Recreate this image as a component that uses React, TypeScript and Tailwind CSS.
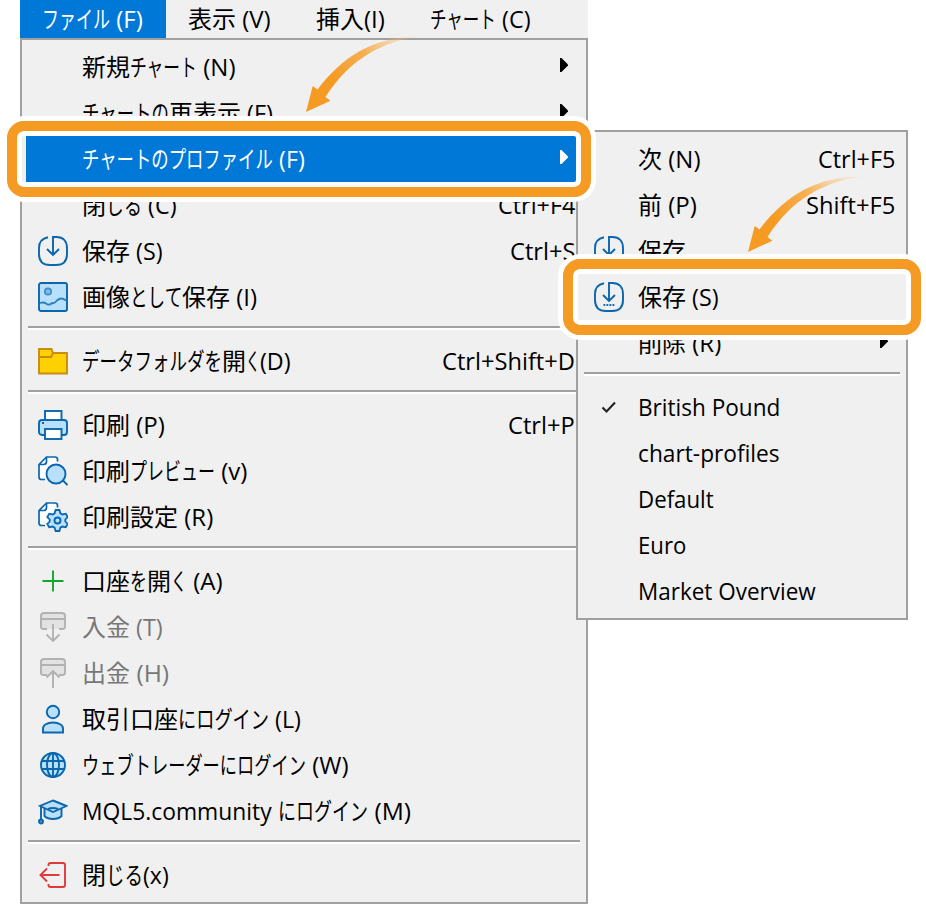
import { useLayoutEffect, useRef, useState } from 'react'
import type { ReactNode } from 'react'

// A run of text and the width it takes up in the menu font
type Run = [text: string, width: number]

interface MenuEntry {
  label: Run[]
  icon?: ReactNode
  shortcut?: Run
  submenu?: boolean
  active?: boolean
  disabled?: boolean
}

const BLUE = '#0a66ad'
const SKY = '#b9e0fb'

function FittedRun({ text, width }: { text: string; width: number }) {
  const ref = useRef<HTMLSpanElement>(null)
  const [scale, setScale] = useState(1)

  useLayoutEffect(() => {
    if (ref.current) setScale(width / ref.current.offsetWidth)
  }, [text, width])

  return (
    <span className="inline-block" style={{ width }}>
      <span ref={ref} className="inline-block origin-left whitespace-pre" style={{ transform: `scaleX(${scale})` }}>
        {text}
      </span>
    </span>
  )
}

function Label({ runs }: { runs: Run[] }) {
  return (
    <span className="flex whitespace-pre">
      {runs.map(([text, width]) => (
        <FittedRun key={text} text={text} width={width} />
      ))}
    </span>
  )
}

function Icon({ children, color = BLUE }: { children: ReactNode; color?: string }) {
  return (
    <svg width="30" height="30" viewBox="0 0 30 30" fill="none" stroke={color} strokeWidth="1.9">
      {children}
    </svg>
  )
}

function SaveIcon({ dots = false }: { dots?: boolean }) {
  return (
    <Icon>
      <path d="M10 1.300C4 2.500 1 6 1 12v6c0 7 4 11 11 11h6c7 0 11-4 11-11v-6c0-7-4-11-10.500-11H15v18" />
      <path d="M9 13l6 6 6-6" />
      {dots && <path d="M9.500 23h11" strokeDasharray="1.800 1.200" />}
    </Icon>
  )
}

function ImageIcon() {
  return (
    <Icon>
      <rect x="1" y="1" width="28" height="28" rx="2" fill={SKY} />
      <circle cx="10" cy="9.500" r="3.200" fill="#82bde8" stroke="#3f8fc8" strokeWidth="1.700" />
      <path d="M2 21c3-1 4-1 6 .5s4 1.500 6-.5c2 1 3 0 5-2.500 3-3 6-2.500 9 0" stroke="#2a7fbd" strokeWidth="1.800" />
    </Icon>
  )
}

function FolderIcon() {
  return (
    <Icon color="#c98b12">
      <path d="M1 3h12.500L15 7h14v20.500H1z" fill="#fdd000" />
      <path d="M1 11h12l2-4" />
    </Icon>
  )
}

function PrinterIcon() {
  return (
    <Icon>
      <rect x="1" y="10" width="28" height="15" rx="3" fill={SKY} />
      <rect x="7" y="1" width="16.500" height="9" fill="#fff" />
      <rect x="7" y="19" width="16.500" height="10" fill="#fff" />
      <path d="M4 13h2" />
    </Icon>
  )
}

function PagePath() {
  return (
    <>
      <path d="M8 1h9.500l2 2v5L8 23.500H2L1 8z" fill="#fff" stroke="none" />
      <path d="M19.500 5.500V3.500Q19.500 1 17 1H8.500L1 8.500V21q0 2.500 2.500 2.500H7M1 8.500h4.500q3 0 3-3V1" strokeWidth="1.700" />
    </>
  )
}

function PreviewIcon() {
  return (
    <Icon>
      <PagePath />
      <circle cx="18" cy="18" r="9.500" fill={SKY} />
      <path d="M25 24.500l4.500 4.500" />
    </Icon>
  )
}

function SettingsIcon() {
  return (
    <Icon>
      <PagePath />
      <path
        d="M17.600 8h3.800l1 3.300 2 1.200 3.400-.8 1.900 3.300-2.400 2.500v2l2.400 2.500-1.900 3.300-3.400-.8-2 1.200-1 3.300h-3.800l-1-3.300-2-1.200-3.400.8L9.300 22l2.400-2.500v-2L9.300 15l1.900-3.300 3.400.8 2-1.200z"
        fill={SKY}
        strokeWidth="1.800"
      />
      <circle cx="19.500" cy="18.500" r="3" />
    </Icon>
  )
}

function CardIcon({ up = false }: { up?: boolean }) {
  return (
    <Icon color="#b2b2b2">
      <path d="M2.500 1h25v16h-25z" fill="#e2e2e2" stroke="none" />
      <path d="M9 17H5.500Q3 17 3 14.500V4q0-3 3-3h18q3 0 3 3v10.500q0 2.500-2.500 2.500H21M3 7h24" />
      {up ? <path d="M15 30V13.500M8.500 19.500l6.500-6.500 6.500 6.500" /> : <path d="M15 12v16.500M8.500 22.500l6.500 6.500 6.500-6.500" />}
    </Icon>
  )
}

function UserIcon() {
  return (
    <Icon>
      <circle cx="15" cy="8" r="6.200" fill={SKY} />
      <path d="M5 28.500v-4c0-3.500 4-6 10-6s10 2.500 10 6v4z" fill={SKY} />
    </Icon>
  )
}

function GlobeIcon() {
  return (
    <Icon>
      <circle cx="15" cy="15" r="12" fill={SKY} />
      <ellipse cx="15" cy="15" rx="6" ry="12" />
      <path d="M15 3v24M4 11h22M4 19h22" />
    </Icon>
  )
}

function CapIcon() {
  return (
    <Icon>
      <path d="M6.500 12v8c4 4 13 4 17 0v-8" fill={SKY} />
      <path d="M15 4.500L28.500 10 15 16 2 10z" fill={SKY} />
      <path d="M10 13q5-2 10 0M3 10.500v13" />
      <circle cx="3" cy="25.500" r="2" fill="#4f9ad0" />
    </Icon>
  )
}

function PlusIcon() {
  return (
    <Icon color="#12a52e">
      <path d="M15 4.500v21M4.500 15h21" />
    </Icon>
  )
}

function ExitIcon() {
  return (
    <Icon color="#de3b39">
      <path d="M10.500 6V5q0-2 2-2H25q2 0 2 2v20q0 2-2 2H12.500q-2 0-2-2v-1M21.500 15H3M9 8.500L2.500 15 9 21.500" />
    </Icon>
  )
}

function CheckIcon() {
  return (
    <Icon color="#222">
      <path d="M8.500 15.500l4 4L21 10.500" strokeWidth="2.100" />
    </Icon>
  )
}

const menuBar: { label: Run[]; className: string }[] = [
  { label: [['ファイル', 68], [' (F)', 33]], className: 'w-[146px] bg-[#0078d7] pl-[22px] text-white' },
  { label: [['表示', 48], [' (V)', 35]], className: 'w-[128px] pl-[22px]' },
  { label: [['挿入', 48], ['(I)', 21]], className: 'w-[115px] pl-[22px]' },
  { label: [['チャート', 66], [' (C)', 35]], className: 'flex-1 pl-[21px]' },
]

const fileMenu: MenuEntry[][] = [
  [
    { label: [['新規', 48], ['チャート', 67], [' (N)', 38]], submenu: true },
    { label: [['チャートの', 87], ['再表示', 72], [' (F)', 32]], submenu: true },
    { label: [['チャートのプロファイル', 191], [' (F)', 32]], submenu: true, active: true },
    { label: [['閉', 24], ['じる', 36], [' (C)', 35]], shortcut: ['Ctrl+F4', 77] },
    { label: [['保存', 48], [' (S)', 33]], icon: <SaveIcon />, shortcut: ['Ctrl+S', 65] },
    { label: [['画像', 48], ['として', 52], ['保存', 48], [' (I)', 27]], icon: <ImageIcon /> },
  ],
  [
    {
      label: [['データフォルダを', 140], ['開', 24], ['く', 14], ['(D)', 31]],
      icon: <FolderIcon />,
      shortcut: ['Ctrl+Shift+D', 133],
    },
  ],
  [
    { label: [['印刷', 48], [' (P)', 35]], icon: <PrinterIcon />, shortcut: ['Ctrl+P', 67] },
    { label: [['印刷', 48], ['プレビュー', 85], [' (v)', 32]], icon: <PreviewIcon /> },
    { label: [['印刷設定', 96], [' (R)', 35]], icon: <SettingsIcon /> },
  ],
  [
    { label: [['口座', 48], ['を', 17], ['開', 24], ['く', 16], [' (A)', 36]], icon: <PlusIcon /> },
    { label: [['入金', 48], [' (T)', 33]], icon: <CardIcon />, disabled: true },
    { label: [['出金', 48], [' (H)', 39]], icon: <CardIcon up />, disabled: true },
    { label: [['取引口座', 96], ['にログイン', 91], [' (L)', 32]], icon: <UserIcon /> },
    { label: [['ウェブトレーダーにログイン', 224], [' (W)', 43]], icon: <GlobeIcon /> },
    { label: [['MQL5.community ', 196], ['にログイン', 90], [' (M)', 43]], icon: <CapIcon /> },
  ],
  [{ label: [['閉', 24], ['じる', 37], ['(x)', 26]], icon: <ExitIcon /> }],
]

const profileMenu: MenuEntry[][] = [
  [
    { label: [['次', 24], [' (N)', 38]], shortcut: ['Ctrl+F5', 77] },
    { label: [['前', 24], [' (P)', 35]], shortcut: ['Shift+F5', 89] },
    { label: [['保存', 48]], icon: <SaveIcon /> },
    { label: [['保存', 48], [' (S)', 33]], icon: <SaveIcon dots /> },
    { label: [['削除', 48], [' (R)', 35]], submenu: true },
  ],
  [
    { label: [['British Pound', 142]], icon: <CheckIcon /> },
    { label: [['chart-profiles', 142]] },
    { label: [['Default', 76]] },
    { label: [['Euro', 48]] },
    { label: [['Market Overview', 178]] },
  ],
]

function MenuRow({ entry }: { entry: MenuEntry }) {
  const { label, icon, shortcut, submenu, active, disabled } = entry
  const color = active ? 'bg-[#0078d7] text-white' : disabled ? 'text-[#777]' : 'text-black'

  return (
    <div className={`mx-1 flex h-[46px] items-center pr-[7px] pl-3 ${color}`}>
      <span className="mr-[14px] h-[30px] w-[30px] shrink-0">{icon}</span>
      <Label runs={label} />
      <span className="ml-auto">{shortcut && <Label runs={[shortcut]} />}</span>
      {submenu && (
        <svg className="mr-[7px] mb-1" width="8" height="14" viewBox="0 0 8 14" fill="currentColor">
          <path d="M0 0h1.500L8 6.500v1L1.500 14H0z" />
        </svg>
      )}
    </div>
  )
}

function MenuPanel({ groups, className }: { groups: MenuEntry[][]; className: string }) {
  return (
    <div className={`border-2 border-[#a0a0a0] bg-[#f0f0f0] py-1 ${className}`}>
      {groups.map((group, i) => (
        <div key={i}>
          {i > 0 && <div className="mx-[6px] mt-[6px] mb-2 h-1 border-t-2 border-[#a0a0a0] bg-white" />}
          {group.map((entry, j) => (
            <MenuRow key={j} entry={entry} />
          ))}
        </div>
      ))}
    </div>
  )
}

function Highlight({ className }: { className: string }) {
  return (
    <div
      className={`absolute h-[76px] rounded-[17px] border-10 border-[#f59b23] shadow-[0_0_0_5px_white,inset_0_0_0_5px_white] ${className}`}
    />
  )
}

function CurvedArrow({ id, className }: { id: string; className: string }) {
  return (
    <svg className={`absolute ${className}`} width="122" height="80" viewBox="0 0 122 80">
      <defs>
        <linearGradient id={id} gradientUnits="userSpaceOnUse" x1="30" y1="48" x2="116" y2="2">
          <stop offset="0" stopColor="#f59b23" />
          <stop offset="0.400" stopColor="#f6a840" stopOpacity="0.900" />
          <stop offset="1" stopColor="#f9c178" stopOpacity="0" />
        </linearGradient>
      </defs>
      <path d="M0 77L6.700 51l4.800 3.500C36 22 68 0 119 1.200 76 5 43 25 19.500 62l5 3.700z" fill={`url(#${id})`} />
    </svg>
  )
}

export default function App() {
  return (
    <div className="relative h-[904px] w-[926px] overflow-hidden bg-white pl-5 font-['Open_Sans','Noto_Sans_CJK_JP',sans-serif] text-[24px] leading-[30px] text-black">
      <div className="flex h-[38px] w-[568px] bg-[#f0f0f0]">
        {menuBar.map(({ label, className }, i) => (
          <div key={i} className={`flex items-center ${className}`}>
            <Label runs={label} />
          </div>
        ))}
      </div>
      <MenuPanel groups={fileMenu} className="w-[568px]" />

      {/* Profile submenu opens over the file menu */}
      <MenuPanel groups={profileMenu} className="absolute top-[130px] left-[576px] w-[332px]" />

      <CurvedArrow id="arrow-file" className="top-[35px] left-[306px]" />
      <Highlight className="top-[121px] left-[7px] w-[584px]" />
      <CurvedArrow id="arrow-profile" className="top-[175px] left-[748px]" />
      <Highlight className="top-[259px] left-[563px] w-[358px]" />
    </div>
  )
}
